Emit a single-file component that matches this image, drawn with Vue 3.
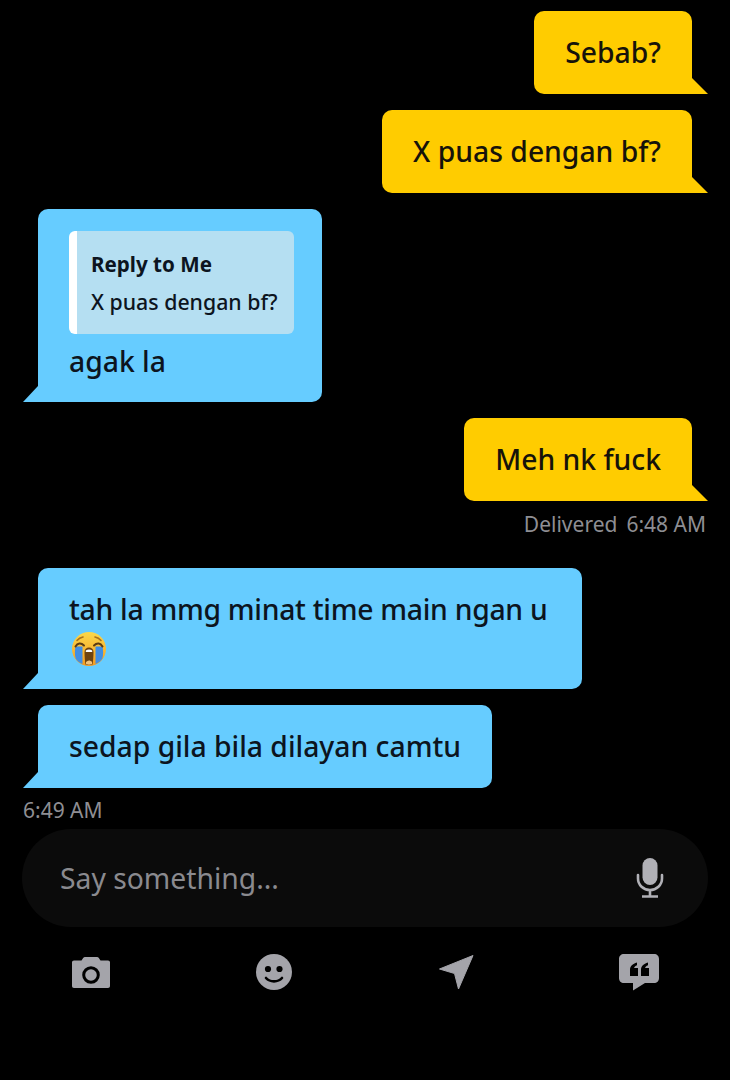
<script setup>
const tools = ['camera', 'smile', 'send', 'quote']
</script>

<template>
  <div class="chat">
    <div class="msg me first"><div class="bubble">Sebab?</div></div>
    <div class="msg me"><div class="bubble">X puas dengan bf?</div></div>

    <div class="msg them">
      <div class="bubble reply-bubble">
        <div class="reply">
          <div class="reply-title">Reply to Me</div>
          <div class="reply-text">X puas dengan bf?</div>
        </div>
        <div>agak la</div>
      </div>
    </div>

    <div class="msg me"><div class="bubble">Meh nk fuck</div></div>
    <div class="meta right"><span>Delivered</span><span>6:48 AM</span></div>

    <div class="msg them after-meta">
      <div class="bubble wide">
        tah la mmg minat time main ngan u
        <svg class="emoji" viewBox="0 0 34 34">
          <defs>
            <linearGradient id="face" x1="0" y1="0" x2="0" y2="1">
              <stop offset="0" stop-color="#fbd84a" />
              <stop offset="1" stop-color="#f59a1f" />
            </linearGradient>
          </defs>
          <circle cx="17" cy="17" r="17" fill="url(#face)" />
          <path d="M3.500 14.500h7v17.500c-3-1-5.500-3-6.800-5.500C2.500 23 2.800 18 3.500 14.500Z" fill="#3f8ee6" />
          <path d="M30.500 14.500h-7v17.500c3-1 5.500-3 6.800-5.500 1.200-3.500.9-8.500.2-12Z" fill="#3f8ee6" />
          <path d="M12.500 20c0-3 2-4.500 4.500-4.500s4.500 1.500 4.500 4.500c0 4-.3 8-1 12.500-2.200.7-4.800.7-7 0-.7-4.500-1-8.500-1-12.500Z" fill="#6e4310" />
          <path d="M13.800 18.500c1.800-1.300 4.600-1.300 6.400 0v1.500h-6.400Z" fill="#fff" />
          <path d="M14 30c1.800-2 4.200-2 6 0v2.300c-2 .6-4 .6-6 0Z" fill="#f2c27a" />
          <path d="M3.500 14.500c2-3.500 5.500-4 8.500-1M22 13.500c3-3 6.500-2.500 8.500 1" fill="none" stroke="#5c3b12" stroke-width="2" stroke-linecap="round" />
          <path d="M5 8.500c1.500-1.800 3.500-3 6-3.500M23 5c2.500.5 4.500 1.700 6 3.500" fill="none" stroke="#a8721c" stroke-width="1.600" stroke-linecap="round" />
        </svg>
      </div>
    </div>
    <div class="msg them"><div class="bubble">sedap gila bila dilayan camtu</div></div>
    <div class="meta left"><span>6:49 AM</span></div>

    <div class="input-bar">
      <span class="placeholder">Say something...</span>
      <svg class="mic" viewBox="0 0 28 42">
        <rect x="6.500" y="1" width="15" height="27" rx="7.500" fill="#b0b0b6" />
        <path d="M2 18v3.500C2 28 7.500 33 14 33s12-5 12-11.500V18" fill="none" stroke="#b0b0b6" stroke-width="2.600" stroke-linecap="round" />
        <path d="M14 33v6M6 39.500h16" fill="none" stroke="#b0b0b6" stroke-width="2.600" />
      </svg>
    </div>

    <div class="tools">
      <div v-for="t in tools" :key="t" class="tool">
        <svg v-if="t === 'camera'" width="38" height="31" viewBox="0 0 38 31">
          <path d="M2 3.500h7.500L11 1.200C11.500.4 12.300 0 13 0h12c.8 0 1.500.4 2 1.200l1.500 2.300H36c1.200 0 2 .8 2 2V29c0 1.200-.8 2-2 2H2c-1.200 0-2-.8-2-2V5.500c0-1.200.8-2 2-2Z" fill="#a4a4aa" />
          <circle cx="19" cy="18" r="7.300" fill="none" stroke="#000" stroke-width="3" />
        </svg>
        <svg v-else-if="t === 'smile'" width="36" height="36" viewBox="0 0 36 36">
          <circle cx="18" cy="18" r="18" fill="#a4a4aa" />
          <circle cx="12" cy="15" r="3.100" fill="#000" />
          <circle cx="23.500" cy="15" r="3.100" fill="#000" />
          <path d="M10 24c4 4.500 12 4.500 16 0" fill="none" stroke="#000" stroke-width="2.600" stroke-linecap="round" />
        </svg>
        <svg v-else-if="t === 'send'" width="35" height="35" viewBox="0 0 35 35">
          <path d="M34 .5 19.500 34 15.500 18.500.5 14Z" fill="#a4a4aa" stroke="#a4a4aa" stroke-linejoin="round" />
        </svg>
        <svg v-else width="40" height="37" viewBox="0 0 40 37">
          <path d="M5 0h30c3 0 5 2 5 5v19c0 3-2 5-5 5H26L14 36.500V29H5c-3 0-5-2-5-5V5c0-3 2-5 5-5Z" fill="#a4a4aa" />
          <path d="M11 22v-6.500c0-3 2.500-5.800 7-7v2.700c-1.700.7-2.700 1.700-2.900 2.800H19v8ZM22 22v-6.500c0-3 2.500-5.800 7-7v2.700c-1.700.7-2.700 1.700-2.900 2.800H30v8Z" fill="#000" />
        </svg>
      </div>
    </div>
  </div>
</template>

<style scoped>
.chat {
  width: 730px;
  height: 1080px;
  background: #000;
  font-family: "Noto Sans", "Liberation Sans", sans-serif;
  overflow: hidden;
  display: flex;
  flex-direction: column;
  padding-top: 11px;
  box-sizing: border-box;
}
.msg { display: flex; margin-top: 16px; }
.msg.first { margin-top: 0; }
.msg.me { justify-content: flex-end; padding-right: 38px; }
.msg.them { justify-content: flex-start; padding-left: 38px; }
.msg.after-meta { margin-top: 30px; }
.bubble {
  position: relative;
  padding: 22px 31px;
  font-size: 28.300px;
  line-height: 39px;
  font-weight: 500;
  border-radius: 10px;
  color: #0c1420;
}
.me .bubble { background: #ffcc00; color: #16130a; border-bottom-right-radius: 0; }
.them .bubble { background: #66ccff; border-bottom-left-radius: 0; }
.bubble::after {
  content: "";
  position: absolute;
  bottom: 0;
  height: 16px;
}
.me .bubble::after { width: 16px; right: -16px; background: #ffcc00; clip-path: polygon(0 0, 100% 100%, 0 100%); }
.them .bubble::after { width: 15px; left: -15px; background: #66ccff; clip-path: polygon(100% 0, 100% 100%, 0 100%); }

.reply-bubble { width: 284px; box-sizing: border-box; padding-bottom: 21px; padding-right: 28px; }
.reply {
  background: #b5dff2;
  border-left: 8px solid #fff;
  border-radius: 6px;
  padding: 15px 0 0 14px;
  height: 103px;
  box-sizing: border-box;
  margin-bottom: 8px;
  font-size: 21.300px;
  line-height: 37px;
  white-space: nowrap;
}
.reply-title { font-weight: 700; font-size: 20.600px; }
.reply-text { font-weight: 500; }
.wide { width: 544px; box-sizing: border-box; padding-right: 20px; letter-spacing: -0.27px; }
.emoji { display: block; width: 34px; height: 34px; margin: 3px 0 1px 3px; }
.meta {
  font-size: 21px;
  line-height: 28px;
  color: #8e8e93;
  display: flex;
  gap: 9px;
}
.meta.right { justify-content: flex-end; padding-right: 24px; margin-top: 9px; }
.meta.left { padding-left: 23px; margin-top: 8px; }

.input-bar {
  margin: 5px 22px 0;
  height: 98px;
  border-radius: 49px;
  background: #0b0b0b;
  display: flex;
  align-items: center;
  justify-content: space-between;
  padding: 0 44px 0 38px;
  flex-shrink: 0;
}
.placeholder { font-size: 28.300px; color: #8a8a8f; }
.mic { width: 28px; height: 42px; }
.tools {
  display: grid;
  grid-template-columns: repeat(4, 1fr);
  margin-top: 25px;
}
.tool { display: flex; justify-content: center; align-items: center; height: 40px; }
</style>
